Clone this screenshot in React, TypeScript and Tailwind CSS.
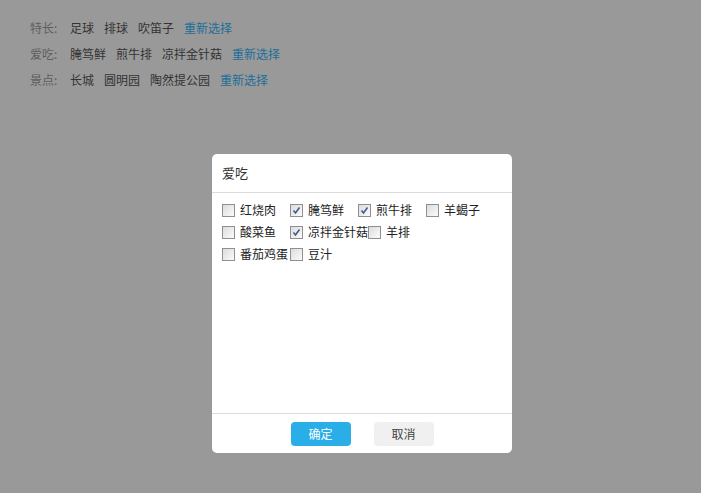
import React from "react";

const font = { fontFamily: '"Noto Sans CJK SC", "Microsoft YaHei", sans-serif' };

function Box({ checked }: { checked: boolean }) {
  return (
    <span className="inline-block w-[13px] h-[13px] border border-[#8e8f8f] bg-gradient-to-br from-[#dcdcdc] to-[#fbfbfb] relative shrink-0">
      {checked && (
        <svg viewBox="0 0 11 11" className="absolute left-0 top-0 w-[11px] h-[11px]">
          <path d="M2.5 5.5 L4.5 8 L8.5 2.5" fill="none" stroke="#3c5e8c" strokeWidth="1.6" />
        </svg>
      )}
    </span>
  );
}

const rows = [
  { label: "特长:", items: ["足球", "排球", "吹笛子"] },
  { label: "爱吃:", items: ["腌笃鲜", "煎牛排", "凉拌金针菇"] },
  { label: "景点:", items: ["长城", "圆明园", "陶然提公园"] },
];

const foods: [string, boolean][] = [
  ["红烧肉", false],
  ["腌笃鲜", true],
  ["煎牛排", true],
  ["羊蝎子", false],
  ["酸菜鱼", false],
  ["凉拌金针菇", true],
  ["羊排", false],
  ["番茄鸡蛋", false],
  ["豆汁", false],
];

export default function App() {
  return (
    <div className="relative w-[701px] h-[493px] bg-[#999999] text-[12px]" style={font}>
      <div className="pt-[15px] pl-[30px] flex flex-col">
        {rows.map((r) => (
          <div key={r.label} className="flex gap-[10px] leading-[26px] h-[26px]">
            <span className="text-[#5e5e5e] w-[30px]">{r.label}</span>
            {r.items.map((i) => (
              <span key={i} className="text-[#333333]">{i}</span>
            ))}
            <span className="text-[#1c6e98]">重新选择</span>
          </div>
        ))}
      </div>

      <div className="absolute left-[212px] top-[154px] w-[300px] h-[299px] bg-white rounded-[5px] flex flex-col">
        <div className="h-[39px] border-b border-[#dcdcdc] flex items-center px-[10px] text-[13px] text-[#333]">
          爱吃
        </div>
        <div className="flex-1 px-[10px] pt-[6px] flex flex-wrap content-start">
          {foods.map(([name, c]) => (
            <label key={name} className="min-w-[68px] h-[22px] flex items-center text-[#222]">
              <Box checked={c} />
              <span className="ml-[5px] whitespace-nowrap">{name}</span>
            </label>
          ))}
        </div>
        <div className="h-[40px] border-t border-[#dcdcdc] flex justify-center gap-[23px] pt-[8px]">
          <button className="w-[60px] h-[24px] rounded-[4px] bg-[#29aee8] text-white text-[12px]">确定</button>
          <button className="w-[60px] h-[24px] rounded-[4px] bg-[#f0f0f0] text-[#444] text-[12px]">取消</button>
        </div>
      </div>
    </div>
  );
}
